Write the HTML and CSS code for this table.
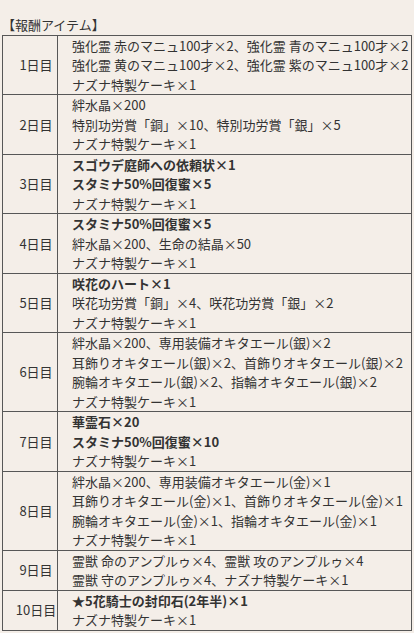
FILE: index.html
```html
<!DOCTYPE html>
<html lang="ja">
<head>
<meta charset="utf-8">
<link rel="stylesheet" href="styles.css">
</head>
<body>
<div class="wrap">
  <p class="title">【報酬アイテム】</p>
  <table class="rewards">
    <tr><th>1日目</th><td><span>強化霊 赤のマニュ100才×2、強化霊 青のマニュ100才×2</span><span>強化霊 黄のマニュ100才×2、強化霊 紫のマニュ100才×2</span><span>ナズナ特製ケーキ×1</span></td></tr>
    <tr><th>2日目</th><td><span>絆水晶×200</span><span>特別功労賞「銅」×10、特別功労賞「銀」×5</span><span>ナズナ特製ケーキ×1</span></td></tr>
    <tr><th>3日目</th><td><span class="b">スゴウデ庭師への依頼状×1</span><span class="b">スタミナ50%回復蜜×5</span><span>ナズナ特製ケーキ×1</span></td></tr>
    <tr><th>4日目</th><td><span class="b">スタミナ50%回復蜜×5</span><span>絆水晶×200、生命の結晶×50</span><span>ナズナ特製ケーキ×1</span></td></tr>
    <tr><th>5日目</th><td><span class="b">咲花のハート×1</span><span>咲花功労賞「銅」×4、咲花功労賞「銀」×2</span><span>ナズナ特製ケーキ×1</span></td></tr>
    <tr><th>6日目</th><td><span>絆水晶×200、専用装備オキタエール(銀)×2</span><span>耳飾りオキタエール(銀)×2、首飾りオキタエール(銀)×2</span><span>腕輪オキタエール(銀)×2、指輪オキタエール(銀)×2</span><span>ナズナ特製ケーキ×1</span></td></tr>
    <tr><th>7日目</th><td><span class="b">華霊石×20</span><span class="b">スタミナ50%回復蜜×10</span><span>ナズナ特製ケーキ×1</span></td></tr>
    <tr><th>8日目</th><td><span>絆水晶×200、専用装備オキタエール(金)×1</span><span>耳飾りオキタエール(金)×1、首飾りオキタエール(金)×1</span><span>腕輪オキタエール(金)×1、指輪オキタエール(金)×1</span><span>ナズナ特製ケーキ×1</span></td></tr>
    <tr><th>9日目</th><td><span>霊獣 命のアンプルゥ×4、霊獣 攻のアンプルゥ×4</span><span>霊獣 守のアンプルゥ×4、ナズナ特製ケーキ×1</span></td></tr>
    <tr><th>10日目</th><td><span class="b">★5花騎士の封印石(2年半)×1</span><span>ナズナ特製ケーキ×1</span></td></tr>
  </table>
</div>
</body>
</html>
```
FILE: styles.css
```css
html, body {
  margin: 0;
  padding: 0;
  background: #f4eee8;
}
body {
  font-family: "Noto Sans CJK JP", "Noto Sans", sans-serif;
  font-size: 13px;
  line-height: 19.5px;
  color: #333333;
}
.wrap {
  padding: 15px 2px 0 2px;
}
.title {
  margin: 0;
  padding: 0;
}
.rewards {
  border-collapse: collapse;
  width: 410px;
  table-layout: fixed;
}
.rewards th,
.rewards td {
  border: 1px solid #575757;
  padding: 0;
  vertical-align: middle;
}
.rewards th {
  width: 42px;
  padding-left: 12px;
  font-weight: normal;
  text-align: center;
  white-space: nowrap;
}
.rewards td {
  padding-left: 14px;
  text-align: left;
}
.rewards td span {
  display: block;
  white-space: nowrap;
}
.rewards td span.b {
  font-weight: bold;
}
```
